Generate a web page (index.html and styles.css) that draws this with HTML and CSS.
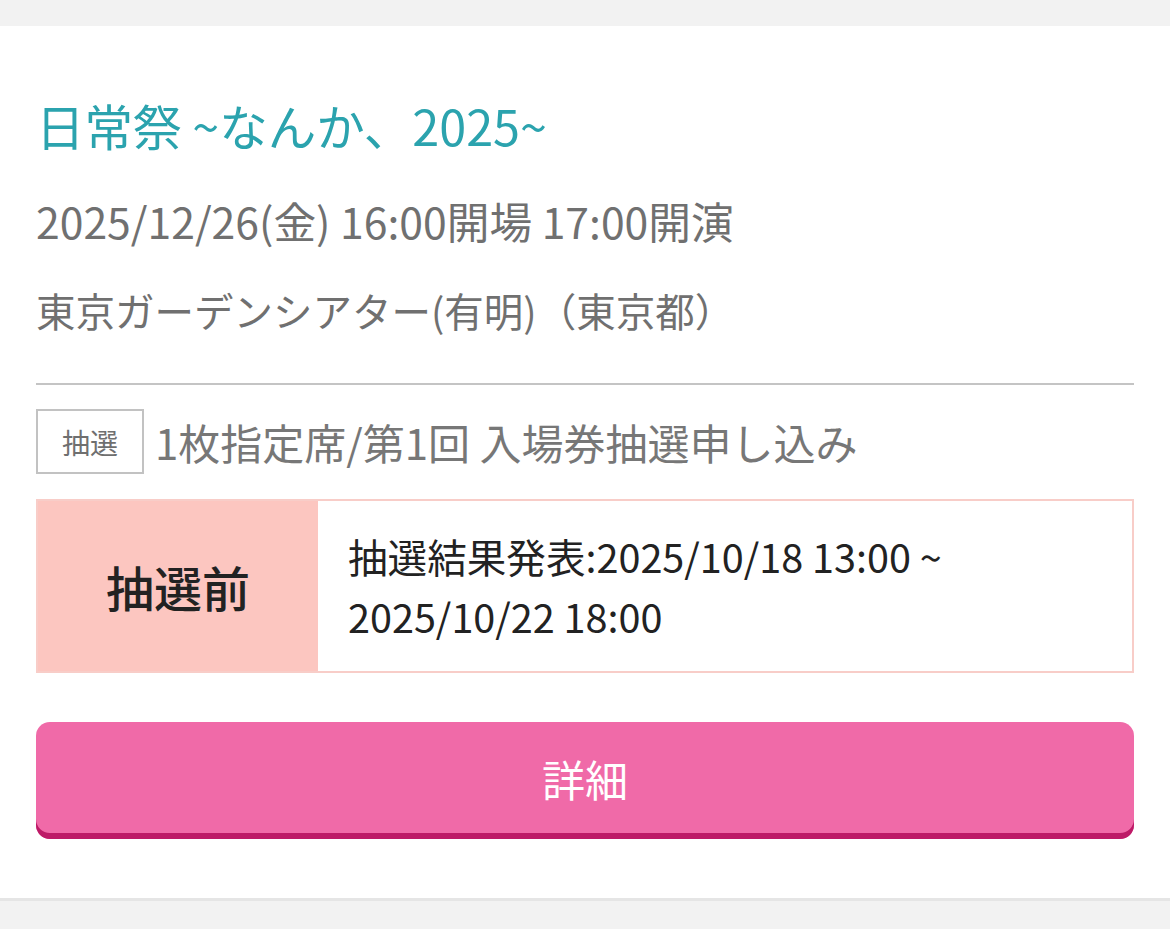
FILE: index.html
```html
<!DOCTYPE html>
<html lang="ja">
  <head>
    <meta charset="UTF-8" />
    <meta name="viewport" content="width=device-width, initial-scale=1.0" />
    <title>日常祭 ~なんか、2025~</title>
    <link rel="stylesheet" href="styles.css">
  </head>
  <body>
    <main class="pagina">
      <section class="evento">
        <h1 class="evento-titulo">日常祭 ~なんか、2025~</h1>
        <p class="evento-data">2025/12/26(金) 16:00開場 17:00開演</p>
        <p class="evento-local">東京ガーデンシアター(有明)（東京都）</p>

        <div class="sorteio">
          <span class="etiqueta">抽選</span>
          <span class="sorteio-nome">1枚指定席/第1回 入場券抽選申し込み</span>
        </div>

        <div class="status">
          <div class="status-rotulo">抽選前</div>
          <div class="status-info">抽選結果発表:2025/10/18 13:00 ~ 2025/10/22 18:00</div>
        </div>

        <button class="detalhe">詳細</button>
      </section>
    </main>
  </body>
</html>
```

FILE: styles.css
```css
body {
  margin: 0;
  font-family: "Noto Sans CJK JP", "Noto Sans", sans-serif;
  background-color: #f2f2f2;
}

.pagina {
  padding-top: 26px;
}

.evento {
  background-color: #fff;
  padding: 69px 36px 59px;
  border-bottom: 3px solid #e5e5e5;
}

.evento-titulo {
  margin: 0;
  font-size: 48.5px;
  font-weight: 400;
  line-height: 60px;
  color: #2ba3ae;
}

.evento-data,
.evento-local {
  margin: 0;
  line-height: 60px;
  color: #707070;
}

.evento-data {
  margin-top: 35px;
  font-size: 42.7px;
}

.evento-local {
  margin-top: 30px;
  padding-bottom: 43px;
  border-bottom: 2px solid #c4c4c4;
  font-size: 39.5px;
}

/* linha do sorteio */
.sorteio {
  display: flex;
  align-items: center;
  gap: 11px;
  margin-top: 24px;
}

.etiqueta {
  display: flex;
  align-items: center;
  justify-content: center;
  width: 108px;
  height: 65px;
  box-sizing: border-box;
  border: 2px solid #c2c2c2;
  font-size: 28px;
  color: #6f6f6f;
}

.sorteio-nome {
  font-size: 42px;
  color: #777;
}

/* caixa de status */
.status {
  display: flex;
  margin-top: 25px;
  height: 174px;
  border: 2px solid #f8cdc8;
  box-sizing: border-box;
}

.status-rotulo {
  width: 280px;
  flex-shrink: 0;
  display: flex;
  align-items: center;
  justify-content: center;
  background-color: #fcc6c0;
  font-size: 48px;
  font-weight: 500;
  color: #222;
}

.status-info {
  display: flex;
  align-items: center;
  padding: 0 30px;
  font-size: 39.6px;
  line-height: 60px;
  color: #222;
}

.detalhe {
  display: block;
  width: 100%;
  height: 117px;
  margin-top: 49px;
  border: 0;
  border-radius: 14px;
  background-color: #f06aa8;
  box-shadow: inset 0 -6px 0 #bd1a67;
  padding: 0 0 6px;
  font-family: inherit;
  font-size: 43px;
  color: #fff;
  cursor: pointer;
}
```
